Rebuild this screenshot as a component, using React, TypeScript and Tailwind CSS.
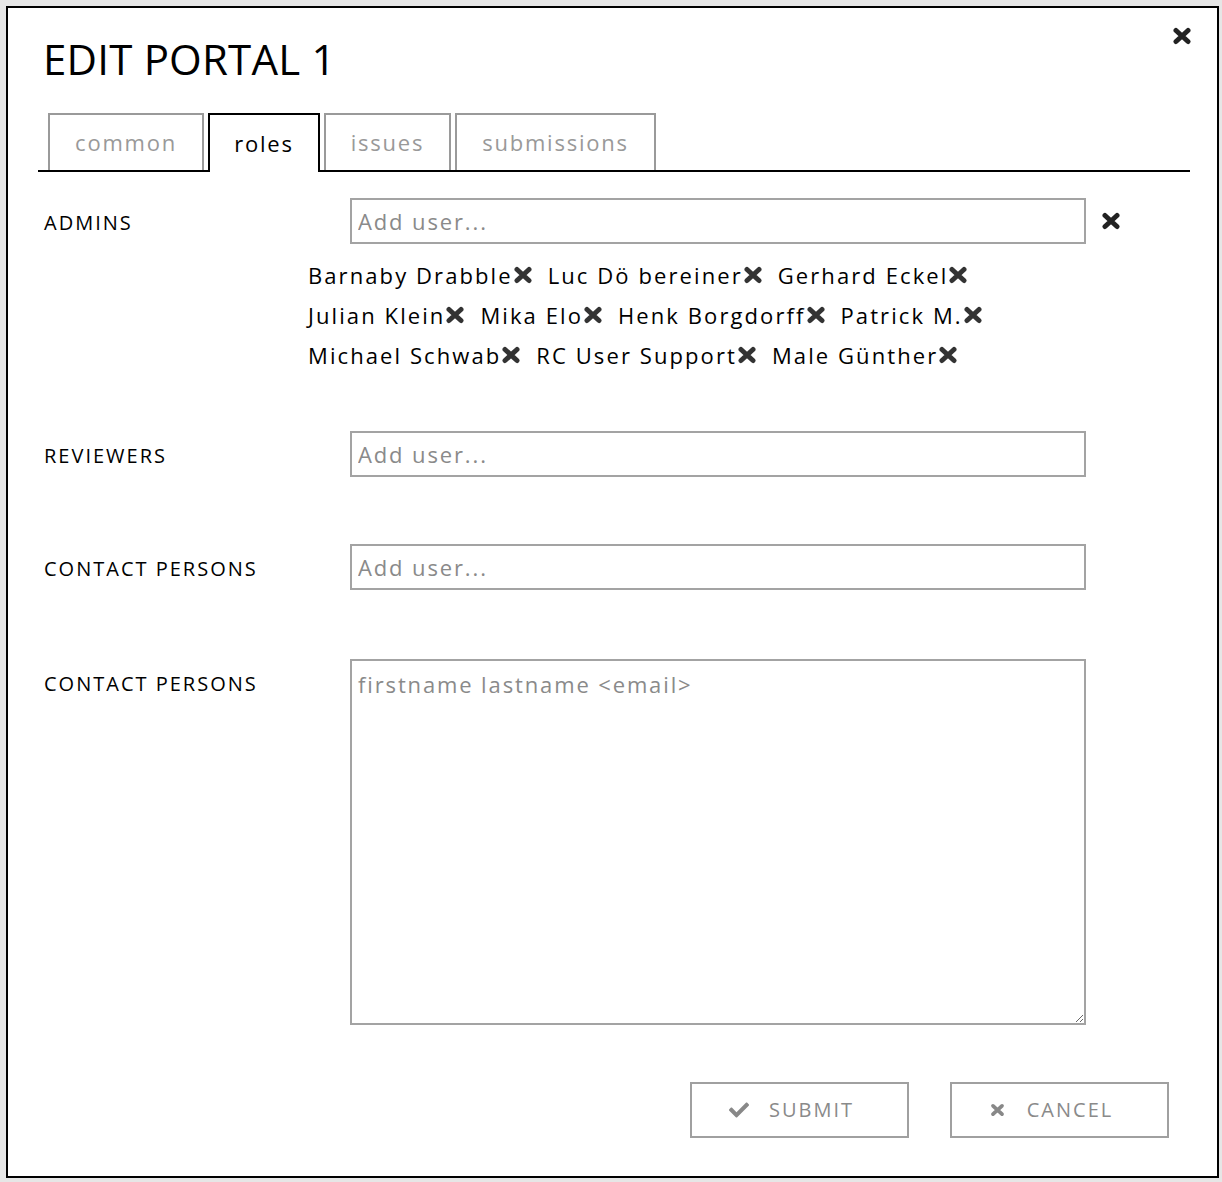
import { FaCheck } from "react-icons/fa"

const font = { fontFamily: '"Open Sans", "Noto Sans", sans-serif' }

const tabs = [
  { name: "common", w: "w-[156px]" },
  { name: "roles", w: "w-[112px]", active: true },
  { name: "issues", w: "w-[127px]" },
  { name: "submissions", w: "w-[201px]" },
]

const adminRows = [
  ["Barnaby Drabble", "Luc Dö bereiner", "Gerhard Eckel"],
  ["Julian Klein", "Mika Elo", "Henk Borgdorff", "Patrick M."],
  ["Michael Schwab", "RC User Support", "Male Günther"],
]

// heavy rounded X, like the old font-awesome "times"
function XIcon({ className }: { className?: string }) {
  return (
    <svg viewBox="0 0 20 18" className={className} fill="none" stroke="currentColor" strokeWidth={5} strokeLinecap="round">
      <path d="M4 3.5 L16 14.5 M16 3.5 L4 14.5" />
    </svg>
  )
}

function UserInput() {
  return (
    <input
      placeholder="Add user..."
      className="w-[736px] h-[46px] border-2 border-[#a3a3a3] px-[6px] text-[22px] tracking-[0.085em] text-black placeholder:text-[#8a8a8a] outline-none"
    />
  )
}

function Label({ children }: { children: string }) {
  return <div className="w-[306px] pt-[3px] text-[20px] tracking-[0.1em] text-black">{children}</div>
}

export default function App() {
  return (
    <div className="min-h-[1182px] bg-[#e6e6e6] pt-[6px] pl-[6px]" style={font}>
      <div className="w-[1213px] h-[1172px] border-2 border-black bg-white flex flex-col">
        {/* Header */}
        <div className="flex items-start justify-between pt-[19px] pl-[35px] pr-[25px]">
          <h1 className="mt-[11px] text-[42px] leading-none tracking-[0.005em] text-black">EDIT PORTAL 1</h1>
          <button className="text-[#222]">
            <XIcon className="w-[20px] h-[18px]" />
          </button>
        </div>

        {/* Tabs */}
        <div className="mt-[33px] ml-[30px] w-[1152px] flex items-end gap-[4px] pl-[10px] border-b-2 border-black">
          {tabs.map((t) =>
            t.active ? (
              <div
                key={t.name}
                className={`${t.w} h-[59px] -mb-[2px] border-2 border-b-0 border-black bg-white flex items-center justify-center text-[22px] tracking-[0.08em] text-black`}
              >
                {t.name}
              </div>
            ) : (
              <div
                key={t.name}
                className={`${t.w} h-[57px] border-2 border-b-0 border-[#9a9a9a] flex items-center justify-center text-[22px] tracking-[0.08em] text-[#999]`}
              >
                {t.name}
              </div>
            )
          )}
        </div>

        {/* Form */}
        <div className="pl-[36px] flex flex-col">
          {/* Admins */}
          <div className="mt-[26px] flex items-center">
            <Label>ADMINS</Label>
            <UserInput />
            <button className="ml-[15px] text-[#222]">
              <XIcon className="w-[20px] h-[18px]" />
            </button>
          </div>
          <div className="ml-[264px] mt-[11px] flex flex-col">
            {adminRows.map((row, i) => (
              <div key={i} className="h-[40px] flex items-center gap-[15px]">
                {row.map((name) => (
                  <span key={name} className="flex items-center text-[22px] tracking-[0.095em] text-black">
                    {name}
                    <XIcon className="w-[20px] h-[18px] text-[#333]" />
                  </span>
                ))}
              </div>
            ))}
          </div>

          {/* Reviewers */}
          <div className="mt-[56px] flex items-center">
            <Label>REVIEWERS</Label>
            <UserInput />
          </div>

          {/* Contact persons */}
          <div className="mt-[67px] flex items-center">
            <Label>CONTACT PERSONS</Label>
            <UserInput />
          </div>

          {/* Contact persons free text */}
          <div className="mt-[69px] flex items-start">
            <div className="pt-[7px]">
              <Label>CONTACT PERSONS</Label>
            </div>
            <textarea
              placeholder="firstname lastname <email>"
              className="w-[736px] h-[366px] border-2 border-[#a3a3a3] px-[6px] py-[7px] text-[22px] tracking-[0.085em] text-black placeholder:text-[#8a8a8a] outline-none"
            />
          </div>
        </div>

        {/* Buttons */}
        <div className="mt-[57px] pr-[48px] flex justify-end gap-[41px]">
          <button className="w-[219px] h-[56px] border-2 border-[#a0a0a0] flex items-center justify-center gap-[20px] pr-[16px] text-[20px] tracking-[0.1em] text-[#8a8a8a]">
            <FaCheck className="w-[20px] h-[20px] text-[#888]" />
            SUBMIT
          </button>
          <button className="w-[219px] h-[56px] border-2 border-[#a0a0a0] flex items-center justify-center gap-[22px] pr-[16px] text-[20px] tracking-[0.1em] text-[#8a8a8a]">
            <XIcon className="w-[15px] h-[14px] text-[#888]" />
            CANCEL
          </button>
        </div>
      </div>
    </div>
  )
}
